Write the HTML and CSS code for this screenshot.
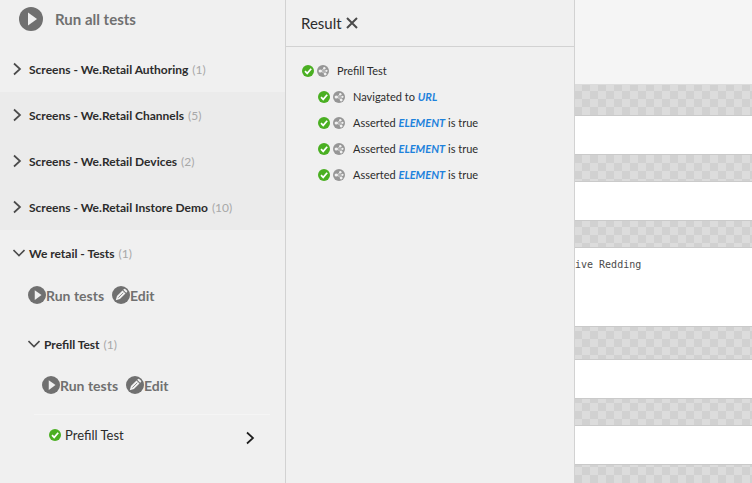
FILE: index.html
```html
<!DOCTYPE html>
<html lang="en">
<head>
<meta charset="utf-8">
<title>Test runner</title>
<link rel="stylesheet" href="styles.css">
</head>
<body>
<svg class="sprite" aria-hidden="true">
  <symbol id="play" viewBox="0 0 24 24"><circle cx="12" cy="12" r="12" fill="#707070"/><path d="M9 5.500v13l9-6.500z" fill="#f0f0f0"/></symbol>
  <symbol id="edit" viewBox="0 0 24 24"><circle cx="12" cy="12" r="12" fill="#707070"/><path d="M5 19l1.600-5.600L14 6l4 4-7.400 7.400zM14.900 5.100l1.200-1.200q.8-.6 1.500 0l2.500 2.500q.6.700 0 1.500L18.900 9.100z" fill="#f0f0f0"/><path d="M8.500 15.500l6.500-6.500" stroke="#707070" stroke-width="1"/></symbol>
  <symbol id="check" viewBox="0 0 12 12"><circle cx="6" cy="6" r="6" fill="#4aaf22"/><path d="M3 6.200l2.200 2.200 4-4.600" fill="none" stroke="#fff" stroke-width="1.700"/></symbol>
  <symbol id="share" viewBox="0 0 12 12"><circle cx="6" cy="6" r="6" fill="#969696"/><path d="M7.500 3.300L3.500 6l4.500 2.700M3.500 6h6" fill="none" stroke="#f0f0f0" stroke-width=".6"/><circle cx="3.200" cy="6" r="1.600" fill="#f0f0f0"/><circle cx="7.300" cy="3.300" r="1.200" fill="#f0f0f0"/><circle cx="8.200" cy="9" r="1.400" fill="#f0f0f0"/><circle cx="9.500" cy="5.800" r="1.100" fill="#f0f0f0"/></symbol>
  <symbol id="right" viewBox="0 0 12 14"><path d="M1 1.500L7 7l-6 5.500" fill="none" stroke="currentColor" stroke-width="1.700"/></symbol>
  <symbol id="down" viewBox="0 0 12 14"><path d="M.5 4l5.500 5.500L11.500 4" fill="none" stroke="currentColor" stroke-width="1.600"/></symbol>
  <symbol id="close" viewBox="0 0 12 12"><path d="M1 1l10 10M11 1L1 11" fill="none" stroke="currentColor" stroke-width="2"/></symbol>
</svg>
<div class="app">
  <nav class="tests" aria-label="Tests">
    <button class="run-all"><svg><use href="#play"/></svg>Run all tests</button>
    <button class="suite"><svg class="arrow"><use href="#right"/></svg><b>Screens - We.Retail Authoring</b><span class="count">(1)</span></button>
    <button class="suite shaded"><svg class="arrow"><use href="#right"/></svg><b>Screens - We.Retail Channels</b><span class="count">(5)</span></button>
    <button class="suite shaded"><svg class="arrow"><use href="#right"/></svg><b>Screens - We.Retail Devices</b><span class="count">(2)</span></button>
    <button class="suite shaded"><svg class="arrow"><use href="#right"/></svg><b>Screens - We.Retail Instore Demo</b><span class="count">(10)</span></button>
    <button class="suite"><svg class="arrow"><use href="#down"/></svg><b>We retail - Tests</b><span class="count">(1)</span></button>
    <div class="level">
      <div class="actions">
        <button class="action"><svg><use href="#play"/></svg>Run tests</button>
        <button class="action"><svg><use href="#edit"/></svg>Edit</button>
      </div>
      <button class="suite nested"><svg class="arrow"><use href="#down"/></svg><b>Prefill Test</b><span class="count">(1)</span></button>
      <div class="level">
        <div class="actions">
          <button class="action"><svg><use href="#play"/></svg>Run tests</button>
          <button class="action"><svg><use href="#edit"/></svg>Edit</button>
        </div>
      </div>
    </div>
    <button class="case"><svg class="dot"><use href="#check"/></svg><span class="case-name">Prefill Test</span><svg class="arrow"><use href="#right"/></svg></button>
  </nav>
  <section class="result" aria-labelledby="result-title">
    <header class="result-head"><h2 id="result-title">Result</h2><button class="close" aria-label="Close"><svg><use href="#close"/></svg></button></header>
    <ul class="steps">
      <li><svg class="dot"><use href="#check"/></svg><svg class="dot"><use href="#share"/></svg><span>Prefill Test</span></li>
      <li class="sub"><svg class="dot"><use href="#check"/></svg><svg class="dot"><use href="#share"/></svg><span>Navigated to <a href="#url">URL</a></span></li>
      <li class="sub"><svg class="dot"><use href="#check"/></svg><svg class="dot"><use href="#share"/></svg><span>Asserted <a href="#e1">ELEMENT</a> is true</span></li>
      <li class="sub"><svg class="dot"><use href="#check"/></svg><svg class="dot"><use href="#share"/></svg><span>Asserted <a href="#e2">ELEMENT</a> is true</span></li>
      <li class="sub"><svg class="dot"><use href="#check"/></svg><svg class="dot"><use href="#share"/></svg><span>Asserted <a href="#e3">ELEMENT</a> is true</span></li>
    </ul>
  </section>
  <main class="preview">
    <div class="bar"></div>
    <div class="canvas">
      <div class="field"></div>
      <div class="field"></div>
      <div class="field tall">ive Redding</div>
      <div class="field spaced"></div>
      <div class="field"></div>
    </div>
  </main>
</div>
</body>
</html>
```
FILE: styles.css
```css
* { box-sizing: border-box; }
body {
  margin: 0;
  font-family: Lato, "Noto Sans", sans-serif;
  font-size: 12px;
  color: #2c2c2c;
  background: #f0f0f0;
}
button {
  display: flex;
  align-items: center;
  margin: 0;
  padding: 0;
  border: 0;
  background: none;
  font: inherit;
  color: inherit;
  text-align: left;
  cursor: pointer;
}
svg { display: block; flex: none; }
.sprite { position: absolute; width: 0; height: 0; }
.app {
  display: grid;
  grid-template-columns: 286px 289px 1fr;
  height: 100vh;
  overflow: hidden;
}
.tests { border-right: 1px solid #d2d2d2; }
.run-all {
  width: 100%;
  height: 46px;
  padding: 0 19px 8px;
  gap: 12px;
  font-size: 15px;
  font-weight: 700;
  color: #707070;
}
.run-all svg { width: 24px; height: 24px; }
.suite {
  width: 100%;
  height: 46px;
  padding-left: 13px;
  gap: 4px;
}
.suite b { font-weight: 700; }
.suite.shaded { background: #ebebeb; }
.suite.nested { padding: 2px 0 0; }
.arrow { width: 12px; height: 14px; color: #4b4b4b; }
.count { color: #a8a8a8; }
.level { padding-left: 28px; }
.level .level { padding-left: 14px; }
.actions {
  display: flex;
  gap: 8px;
  padding: 9px 0 15px;
  height: 44px;
}
.action { font-size: 14px; font-weight: 700; color: #707070; }
.action svg { width: 18px; height: 18px; }
.case {
  width: auto;
  min-width: 236px;
  height: 46px;
  margin: 4px 16px 0 34px;
  padding: 0 12px 6px 15px;
  gap: 4px;
  border-top: 1px solid #f5f5f5;
  font-size: 13px;
}
.case-name { flex: 1; }
.case .arrow { color: #1e1e1e; margin-top: 6px; }
.dot { width: 12px; height: 12px; }
.result { border-right: 1px solid #d2d2d2; }
.result-head {
  display: flex;
  align-items: center;
  gap: 4px;
  height: 47px;
  padding-left: 15px;
  border-bottom: 1px solid #d2d2d2;
}
.result-head h2 { margin: 0; font-size: 15px; font-weight: 400; }
.close { color: #4b4b4b; }
.close svg { width: 12px; height: 12px; }
.steps { margin: 0; padding: 11px 16px; list-style: none; font-size: 11px; }
.steps li { display: flex; align-items: center; gap: 3px; height: 26px; }
.steps li.sub { padding-left: 16px; }
.steps span { margin-left: 5px; padding-bottom: 2px; }
.steps a {
  color: #1e82dc;
  font-weight: 700;
  font-style: italic;
  text-decoration: none;
}
.preview { display: flex; flex-direction: column; min-width: 0; }
.bar { height: 85px; flex: none; background: #f5f5f5; border-bottom: 1px solid #dcdcdc; }
.canvas {
  flex: 1;
  display: flex;
  flex-direction: column;
  gap: 26px;
  padding-top: 30px;
  background: repeating-conic-gradient(#d1d1d1 0 25%, #dcdcdc 0 50%) 7px 6px / 16px 16px;
}
.field {
  flex: none;
  height: 40px;
  border: solid #cacaca;
  border-width: 1px 0;
  background: #fff;
}
.tall {
  height: 80px;
  padding-top: 11px;
  font-family: "DejaVu Sans Mono", monospace;
  font-size: 10px;
  color: #4b4b4b;
}
.spaced { margin-top: 6px; }
```
